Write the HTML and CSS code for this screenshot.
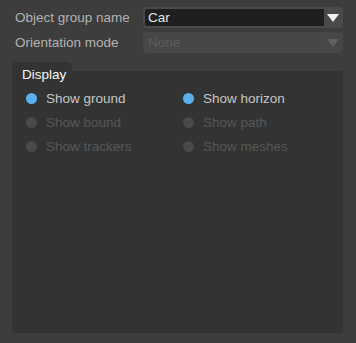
FILE: index.html
```html
<!DOCTYPE html>
<html lang="en">
<head>
    <meta charset="UTF-8">
    <title>Object group</title>
    <link rel="stylesheet" href="styles.css">
</head>
<body>
    <div class="main">
        <div class="field">
            <span class="label">Object group name</span>
            <div class="combo">
                <span class="value">Car</span>
                <span class="arrow"></span>
            </div>
        </div>
        <div class="field">
            <span class="label">Orientation mode</span>
            <div class="combo disabled">
                <span class="value">None</span>
                <span class="arrow"></span>
            </div>
        </div>
        <div class="group">
            <div class="tab">Display</div>
            <div class="panel">
                <div class="grid">
                    <div class="row"><span class="radio on"></span>Show ground</div>
                    <div class="row"><span class="radio on"></span>Show horizon</div>
                    <div class="row off"><span class="radio"></span>Show bound</div>
                    <div class="row off"><span class="radio"></span>Show path</div>
                    <div class="row off"><span class="radio"></span>Show trackers</div>
                    <div class="row off"><span class="radio"></span>Show meshes</div>
                </div>
            </div>
        </div>
    </div>
</body>
</html>
```
FILE: styles.css
```css
*{
    margin: 0;
    padding: 0;
    box-sizing: border-box;
}
body{
    background-color: #3d3d3d;
    font-family: "Liberation Sans", Arial, sans-serif;
    font-size: 13.5px;
}
.main{
    width: 356px;
    height: 343px;
    padding: 7px 13px 10px 12px;
    display: flex;
    flex-direction: column;
}
.field{
    display: flex;
    align-items: center;
    height: 21px;
    margin-bottom: 4px;
}
.label{
    width: 131px;
    padding-left: 3px;
    color: #b2b2b2;
}
.combo{
    flex: 1;
    height: 21px;
    display: flex;
    align-items: center;
    padding: 2px;
    background-color: #4a4a4a;
    border-radius: 4px;
}
.combo .value{
    flex: 1;
    height: 17px;
    line-height: 17px;
    padding-left: 3px;
    background-color: #1f1f1f;
    color: #e6e6e6;
    border-radius: 2px 0 0 2px;
}
.combo .arrow{
    width: 17px;
    display: flex;
    justify-content: center;
}
.combo .arrow::after{
    content: "";
    border-left: 6px solid transparent;
    border-right: 6px solid transparent;
    border-top: 8px solid #f2f2f2;
}
.combo.disabled{
    background-color: #474747;
}
.combo.disabled .value{
    background-color: transparent;
    color: #5c5c5c;
}
.combo.disabled .arrow::after{
    border-top-color: #5f5f5f;
}
.group{
    flex: 1;
    display: flex;
    flex-direction: column;
    margin-top: 5px;
}
.tab{
    align-self: flex-start;
    width: 60px;
    height: 9px;
    padding: 6px 0 0 10px;
    background-color: #333333;
    border-radius: 5px 5px 0 0;
    color: #f6f6f6;
    line-height: 13px;
    position: relative;
    z-index: 1;
}
.panel{
    flex: 1;
    background-color: #333333;
    border-radius: 0 4px 4px 4px;
    padding: 19px 0 0 14px;
}
.grid{
    display: grid;
    grid-template-columns: 157px 1fr;
    row-gap: 8px;
}
.row{
    display: flex;
    align-items: center;
    height: 16px;
    color: #c6c6c6;
}
.row.off{
    color: #565656;
}
.radio{
    width: 11px;
    height: 11px;
    border-radius: 50%;
    background-color: #4a4a4a;
    margin-right: 9px;
}
.radio.on{
    background-color: #5ab0ee;
}
```
